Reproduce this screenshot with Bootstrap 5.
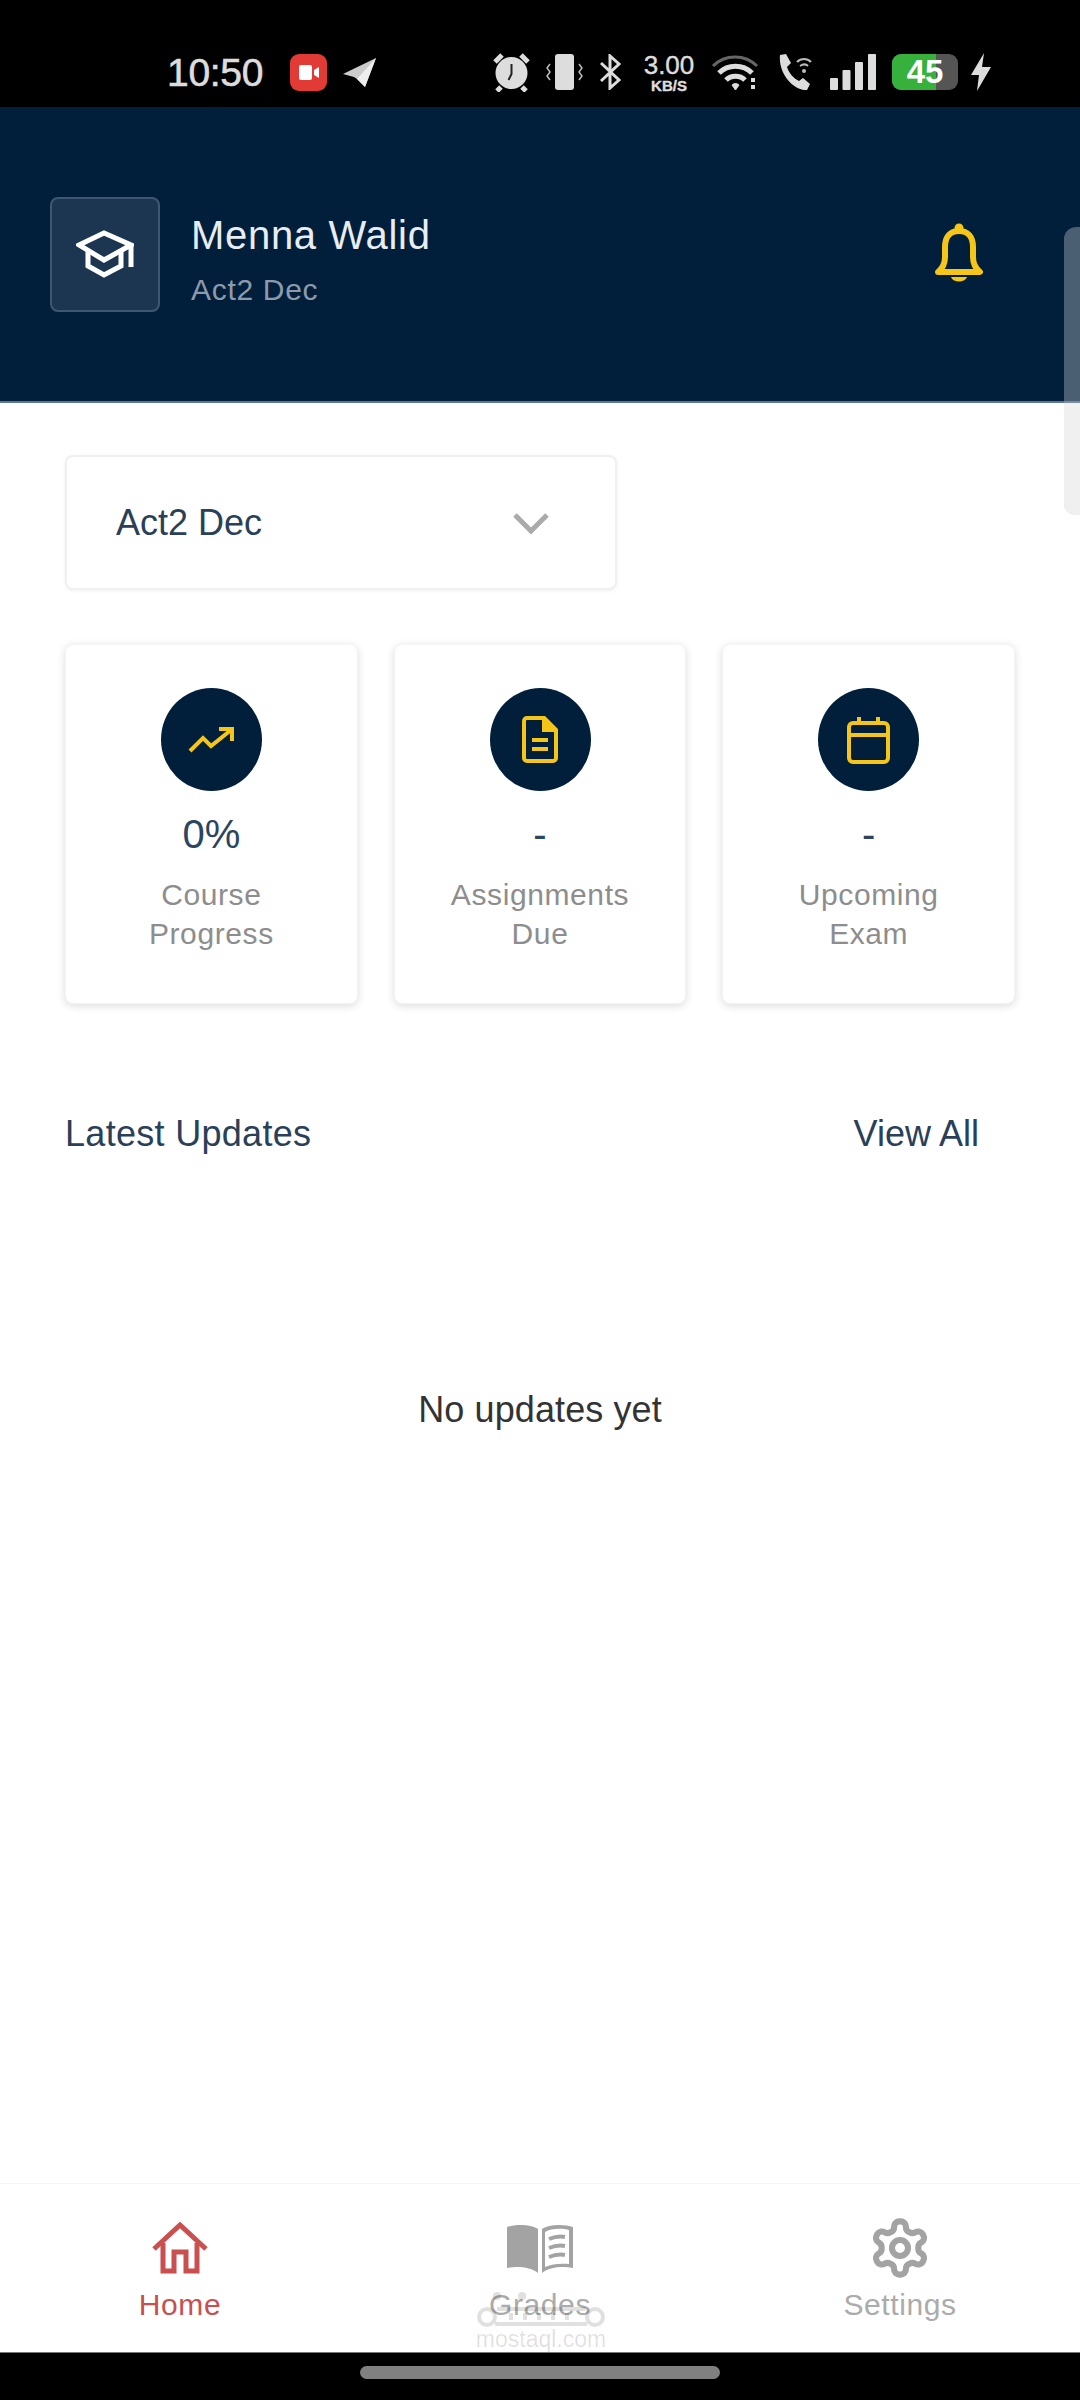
<!DOCTYPE html>
<html lang="en">
<head>
  <meta charset="UTF-8" />
  <meta name="viewport" content="width=device-width, initial-scale=1.0"/>
  <title>Home</title>
  <link href="https://cdn.jsdelivr.net/npm/bootstrap@5.3.0/dist/css/bootstrap.min.css" rel="stylesheet" />
  <style>
    body { font-family: "Liberation Sans", Arial, sans-serif; background: #fff; height: 2400px; overflow: hidden; position: relative; }
    svg { display: block; flex: none; }

    .status-bar { height: 107px; background: #000; color: #ddd; padding: 37px 0 0 167px; }
    .status-time { font-size: 39px; letter-spacing: -.3px; line-height: 1; width: 123px; -webkit-text-stroke: .6px #ddd; }
    .status-gap { width: 117px; }
    .status-speed { width: 58px; text-align: center; font-size: 26px; line-height: 28px; margin-left: 18px; margin-right: 13px; white-space: nowrap; -webkit-text-stroke: .4px #ddd; }
    .status-speed small { display: block; font-size: 15px; line-height: 14px; font-weight: 700; }
    .battery-box { width: 66px; height: 36px; border-radius: 9px; background: #555; margin-left: 16px; margin-right: 12px; overflow: hidden; position: relative; color: #fff; font-size: 33px; line-height: 36px; text-align: center; font-weight: 700; }
    .battery-fill { position: absolute; inset: 0 auto 0 0; width: 44px; background: #36b13c; }
    .battery-num { position: relative; }

    .app-header { height: 296px; background: #011e3b; padding: 0 97px 0 50px; border-bottom: 2px solid #5c7894; }
    .avatar-box { width: 110px; height: 115px; background: #1c3651; border: 2px solid #3f5670; border-radius: 8px; }
    .user-name { font-size: 40px; line-height: 46px; color: #e8edf2; letter-spacing: .7px; }
    .user-sub { font-size: 30px; line-height: 36px; color: #8c9bab; margin-top: 14px; letter-spacing: .7px; }
    .header-text { margin-left: 31px; margin-top: 12px; }

    .scroll-thumb { position: absolute; top: 227px; right: 0; width: 16px; height: 288px; background: rgba(150,160,170,.5); border-radius: 12px 0 0 12px; }
    .scroll-thumb-light { position: absolute; top: 403px; right: 0; width: 16px; height: 112px; background: #f0f0f0; border-radius: 0 0 0 12px; }

    .page-body { padding: 52px 65px 0 65px; }
    .course-select { width: 552px; height: 135px; padding: 0 66px 0 49px; border: 2px solid #f0f0f0; border-radius: 8px; box-shadow: 0 1px 4px rgba(0,0,0,.06); font-size: 36px; color: #2a4058; }
    .stat-row { gap: 36px; margin-top: 54px; }
    .stat-card { width: 293px; height: 360px; padding-top: 43px; border: 1px solid #f4f4f4; border-radius: 8px; box-shadow: 0 2px 8px rgba(0,0,0,.14); }
    .stat-icon { width: 101px; height: 103px; background: #011e3b; }
    .stat-value { font-size: 40px; line-height: 46px; color: #2c4560; margin-top: 20px; }
    .stat-label { font-size: 30px; line-height: 39px; color: #8d8d8d; margin-top: 18px; letter-spacing: .6px; }

    .updates-head { margin-top: 108px; padding-right: 36px; font-size: 36px; line-height: 44px; color: #2a4058; letter-spacing: .3px; }
    .updates-link { letter-spacing: 0; }
    .updates-empty { margin-top: 232px; font-size: 36px; line-height: 44px; color: #333; letter-spacing: .1px; }

    .bottom-nav { position: absolute; left: 0; right: 0; top: 2183px; height: 169px; border-top: 1px solid #f5f5f5; background: #fff; }
    .nav-cell { width: 360px; height: 100%; padding-top: 32px; font-size: 30px; line-height: 36px; color: #ababab; letter-spacing: .6px; }
    .nav-cell.is-active { color: #c9504f; }
    .nav-icon-slot { height: 64px; margin-bottom: 7px; }

    .watermark { position: absolute; left: 475px; top: 2290px; width: 132px; color: rgba(0,0,0,.12); font-size: 23px; line-height: 22px; text-align: center; white-space: nowrap; }
    .home-bar { position: absolute; left: 0; right: 0; top: 2352px; height: 48px; background: #000; border-top: 1px solid #777; }
    .home-pill { width: 360px; height: 13px; margin-top: 13px; background: #808080; border-radius: 7px; }
  </style>
</head>
<body>
  <div class="status-bar d-flex align-items-center">
    <div class="status-time">10:50</div>
    <svg width="37" height="37" viewBox="0 0 37 37"><rect width="37" height="37" rx="9" fill="#e23b35"/><rect x="9" y="11" width="13" height="15" rx="2" fill="#fff"/><path d="M24 16l5-3v11l-5-3z" fill="#fff"/></svg>
    <svg class="ms-3" width="33" height="29" viewBox="0 0 33 29"><path d="M33 0L0 16l11 3 3 2 8 8z" fill="#ccc"/><path d="M33 0L14 21l8 8z" fill="#eee"/></svg>
    <div class="status-gap"></div>
    <svg width="37" height="40" viewBox="0 0 37 40" fill="none" stroke="#ddd"><circle cx="18.500" cy="21" r="14" stroke-width="4" fill="#ddd"/><path d="M18.500 12v10l-3 6" stroke="#222" stroke-width="2"/><path d="M2 10L9 3M35 10L28 3M8 35l-4 4M29 35l4 4" stroke-width="5"/></svg>
    <svg class="ms-3" width="37" height="36" viewBox="0 0 37 36"><rect x="9" y="0" width="19" height="36" rx="3" fill="#ddd"/><path d="M4 10l-3 4 3 4-3 4 3 4M33 10l3 4-3 4 3 4-3 4" fill="none" stroke="#bbb" stroke-width="1.500"/></svg>
    <svg class="ms-3" width="23" height="36" viewBox="0 0 23 36" fill="none" stroke="#ddd" stroke-width="3"><path d="M2 9l18 17-9 8V2l9 8L2 27"/></svg>
    <div class="status-speed">3.00<small>KB/S</small></div>
    <svg width="50" height="36" viewBox="0 0 50 36" fill="none" stroke="#ddd"><path d="M2 12C14 0 34 0 46 12" stroke="#666" stroke-width="3"/><path d="M8 19c9-9 24-9 33 0" stroke-width="5"/><path d="M15 26c5-5 14-5 19 0" stroke-width="5"/><path d="M21 31l3.500 5 3.500-5c-2-2-5-2-7 0z" fill="#ddd" stroke-width="1"/><path d="M42 24v4M42 31v4" stroke-width="4"/></svg>
    <svg class="ms-3" width="37" height="36" viewBox="0 0 37 36"><path d="M3 1l6-1 5 9-4 4c2 6 6 11 12 14l4-3 7 6-3 6C17 37 1 20 3 1z" fill="#ddd"/><path d="M20 8c4-4 10-4 14 0M23 12c3-2 6-2 8 0" fill="none" stroke="#bbb" stroke-width="2"/><circle cx="27" cy="17" r="2" fill="#bbb"/></svg>
    <svg class="ms-3" width="46" height="36" viewBox="0 0 46 36" fill="#ddd"><rect y="24" width="8" height="12" rx="1"/><rect x="12.500" y="16" width="8" height="20" rx="1"/><rect x="25" y="8" width="8" height="28" rx="1"/><rect x="38" y="0" width="8" height="36" rx="1"/></svg>
    <div class="battery-box"><div class="battery-fill"></div><span class="battery-num">45</span></div>
    <svg width="22" height="38" viewBox="0 0 22 38"><path d="M14 0L1 22h8l-2 16L21 14h-9z" fill="#ddd"/></svg>
  </div>

  <header class="app-header d-flex align-items-center">
    <div class="avatar-box d-flex align-items-center justify-content-center">
      <svg width="58" height="48" viewBox="0 0 58 48" fill="none" stroke="#fff" stroke-width="5"><path d="M3 15L28 3l27 12-27 15z"/><path d="M12 20v16l16 9 17-9V20"/><path d="M55 15v22"/></svg>
    </div>
    <div class="header-text">
      <div class="user-name">Menna Walid</div>
      <div class="user-sub">Act2 Dec</div>
    </div>
    <svg class="ms-auto" width="48" height="62" viewBox="0 0 48 62"><circle cx="24" cy="5" r="4.500" fill="#f5c518"/><path d="M3 49c5-4 7-9 7-15V24C10 14 15 8 24 8s14 6 14 16v10c0 6 2 11 7 15z" fill="none" stroke="#f5c518" stroke-width="6" stroke-linejoin="round"/><path d="M16 54h16c-2 6-14 6-16 0z" fill="#f5c518"/></svg>
  </header>

  <div class="scroll-thumb"></div>
  <div class="scroll-thumb-light"></div>

  <main class="page-body">
    <div class="course-select d-flex align-items-center justify-content-between bg-white">
      <span>Act2 Dec</span>
      <svg width="36" height="22" viewBox="0 0 36 22" fill="none" stroke="#aaa" stroke-width="5"><path d="M2 3l16 16L34 3"/></svg>
    </div>

    <div class="stat-row d-flex">
      <div class="stat-card bg-white d-flex flex-column align-items-center text-center">
        <div class="stat-icon rounded-circle d-flex align-items-center justify-content-center">
          <svg width="46" height="27" viewBox="0 0 46 27" fill="none" stroke="#f5c518" stroke-width="4"><path d="M2 25l13-13 8 8L43 4"/><path d="M31 3h13v12"/></svg>
        </div>
        <div class="stat-value">0%</div>
        <div class="stat-label">Course<br>Progress</div>
      </div>
      <div class="stat-card bg-white d-flex flex-column align-items-center text-center">
        <div class="stat-icon rounded-circle d-flex align-items-center justify-content-center">
          <svg width="36" height="47" viewBox="0 0 36 47" fill="none" stroke="#f5c518" stroke-width="4"><path d="M5 2h17l12 12v28a3 3 0 0 1-3 3H5a3 3 0 0 1-3-3V5a3 3 0 0 1 3-3z"/><path d="M22 2v12h12z" fill="#f5c518"/><path d="M10 24h16M10 33h16"/></svg>
        </div>
        <div class="stat-value">-</div>
        <div class="stat-label">Assignments<br>Due</div>
      </div>
      <div class="stat-card bg-white d-flex flex-column align-items-center text-center">
        <div class="stat-icon rounded-circle d-flex align-items-center justify-content-center">
          <svg width="43" height="48" viewBox="0 0 43 48" fill="none" stroke="#f5c518" stroke-width="4"><rect x="2" y="7" width="39" height="39" rx="4"/><path d="M2 19h39M12 1v7M31 1v7"/></svg>
        </div>
        <div class="stat-value">-</div>
        <div class="stat-label">Upcoming<br>Exam</div>
      </div>
    </div>

    <div class="updates-head d-flex justify-content-between">
      <span>Latest Updates</span>
      <span class="updates-link">View All</span>
    </div>
    <div class="updates-empty text-center">No updates yet</div>
  </main>

  <nav class="bottom-nav d-flex">
    <div class="nav-cell is-active d-flex flex-column align-items-center">
      <div class="nav-icon-slot d-flex align-items-center">
        <svg width="56" height="52" viewBox="0 0 56 52" fill="none" stroke="#c9504f" stroke-width="5"><path d="M2 27L28 3l26 24"/><path d="M11 21v28h11V30h12v19h11V21"/></svg>
      </div>
      <div>Home</div>
    </div>
    <div class="nav-cell d-flex flex-column align-items-center">
      <div class="nav-icon-slot d-flex align-items-center">
        <svg width="66" height="49" viewBox="0 0 66 49"><path d="M31 5C24 0 8 0 0 3v41c10-2 24-1 31 5z" fill="#a3a3a3"/><path d="M35 5c7-5 23-5 31-2v41c-10-2-24-1-31 5z" fill="#a3a3a3"/><path d="M38 8c6-4 18-4 24-2v34c-8-1-18 0-24 3z" fill="#fff"/><path d="M42 15c5-2 11-3 16-2M42 24c5-2 11-3 16-2M42 33c5-2 11-3 16-2" fill="none" stroke="#a3a3a3" stroke-width="4"/></svg>
      </div>
      <div>Grades</div>
    </div>
    <div class="nav-cell d-flex flex-column align-items-center">
      <div class="nav-icon-slot d-flex align-items-center">
        <svg width="64" height="64" viewBox="0 0 24 24" fill="none" stroke="#a3a3a3" stroke-width="2.300"><path d="M12.220 2h-.44a2 2 0 0 0-2 2v.18a2 2 0 0 1-1 1.730l-.43.25a2 2 0 0 1-2 0l-.15-.08a2 2 0 0 0-2.730.73l-.22.38a2 2 0 0 0 .73 2.730l.15.1a2 2 0 0 1 1 1.720v.51a2 2 0 0 1-1 1.740l-.15.09a2 2 0 0 0-.73 2.730l.22.38a2 2 0 0 0 2.730.73l.15-.08a2 2 0 0 1 2 0l.43.25a2 2 0 0 1 1 1.730V20a2 2 0 0 0 2 2h.44a2 2 0 0 0 2-2v-.18a2 2 0 0 1 1-1.730l.43-.25a2 2 0 0 1 2 0l.15.08a2 2 0 0 0 2.730-.73l.22-.39a2 2 0 0 0-.73-2.730l-.15-.08a2 2 0 0 1-1-1.740v-.5a2 2 0 0 1 1-1.740l.15-.09a2 2 0 0 0 .73-2.730l-.22-.38a2 2 0 0 0-2.730-.73l-.15.08a2 2 0 0 1-2 0l-.43-.25a2 2 0 0 1-1-1.730V4a2 2 0 0 0-2-2z"/><circle cx="12" cy="12" r="3"/></svg>
      </div>
      <div>Settings</div>
    </div>
  </nav>

  <div class="watermark">
    <svg width="132" height="38" viewBox="0 0 132 38" fill="none" stroke="rgba(0,0,0,.12)" stroke-width="4"><circle cx="12" cy="27" r="8"/><circle cx="120" cy="27" r="8"/><path d="M20 34h92M22 19h88M36 23v7M50 23v7M64 23v7M78 23v7M92 23v7"/><path d="M22 6h.1M47 6h.1" stroke-width="8" stroke-linecap="round"/></svg>
    <div>mostaql.com</div>
  </div>

  <div class="home-bar d-flex justify-content-center">
    <div class="home-pill"></div>
  </div>
</body>
</html>
